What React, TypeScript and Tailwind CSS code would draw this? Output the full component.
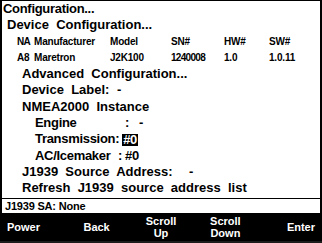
import React from "react";

const rowCls = "h-[16.3px] leading-[16.3px] whitespace-pre";
const big = "text-[13px] tracking-[-0.3px]";

function Line({ indent, children }: { indent: string; children: React.ReactNode }) {
  return <div className={`${rowCls} ${indent} ${big}`}>{children}</div>;
}

export default function App() {
  const buttons = [
    { label: ["Power"], cls: "text-left pl-[7px]" },
    { label: ["Back"], cls: "text-center" },
    { label: ["Scroll", "Up"], cls: "text-center" },
    { label: ["Scroll", "Down"], cls: "text-center" },
    { label: ["Enter"], cls: "text-right pr-[7px]" },
  ];

  return (
    <div
      className="w-[322px] h-[243px] bg-black flex flex-col font-bold text-black"
      style={{ fontFamily: '"Liberation Sans", Arial, sans-serif' }}
    >
      {/* screen area */}
      <div className="mx-[2px] mt-[1px] h-[213px] bg-white flex flex-col">
        <Line indent="pl-[1px]">Configuration...</Line>
        <Line indent="pl-[5px] tracking-[0px]">Device  Configuration...</Line>

        {/* device table */}
        <div className={`${rowCls} text-[10px] tracking-[-0.2px] flex pl-[15px]`}>
          <span className="w-[17px] tracking-[-0.8px]">NA</span>
          <span className="w-[76px]">Manufacturer</span>
          <span className="w-[61px]">Model</span>
          <span className="w-[53px]">SN#</span>
          <span className="w-[45px]">HW#</span>
          <span>SW#</span>
        </div>
        <div className={`${rowCls} text-[10px] tracking-[-0.2px] flex pl-[15px]`}>
          <span className="w-[17px]">A8</span>
          <span className="w-[76px]">Maretron</span>
          <span className="w-[61px]">J2K100</span>
          <span className="w-[53px] tracking-[-0.7px]">1240008</span>
          <span className="w-[45px]">1.0</span>
          <span>1.0.11</span>
        </div>

        <Line indent="pl-[20px] tracking-[0px]">Advanced  Configuration...</Line>
        <div className={`${rowCls} pl-[20px] ${big} tracking-[0px] flex`}>
          <span className="w-[95px]">Device  Label:</span>
          <span>-</span>
        </div>
        <Line indent="pl-[20px] tracking-[0px]">NMEA2000  Instance</Line>
        <div className={`${rowCls} pl-[33px] ${big} flex`}>
          <span className="w-[90px]">Engine</span>
          <span className="w-[14px]">:</span>
          <span>-</span>
        </div>
        <div className={`${rowCls} pl-[33px] ${big} flex items-center`}>
          <span>Transmission:</span>
          <span className="ml-[3px] bg-black text-white leading-[12px] h-[12px] px-[1px] tracking-[-0.5px]">#0</span>
        </div>
        <div className={`${rowCls} pl-[33px] ${big} flex`}>
          <span className="w-[83px]">AC/Icemaker</span>
          <span className="w-[7px]">:</span>
          <span>#0</span>
        </div>
        <div className={`${rowCls} pl-[20px] ${big} tracking-[0px] flex`}>
          <span className="w-[167px]">J1939  Source  Address:</span>
          <span>-</span>
        </div>
        <Line indent="pl-[20px] tracking-[0px]">Refresh  J1939  source  address  list</Line>

        {/* status line */}
        <div className="mt-auto h-[16px] border-y border-black flex items-center pl-[3px] text-[11px] tracking-[-0.2px]">
          J1939 SA: None
        </div>
      </div>

      {/* soft key bar */}
      <div className="flex-1 grid grid-cols-5 items-center text-white text-[11px] leading-[11.5px] border-b-[2px] border-[#1c1c1c]">
        {buttons.map((b, i) => (
          <div key={i} className={b.cls}>
            {b.label.map((l) => (
              <div key={l}>{l}</div>
            ))}
          </div>
        ))}
      </div>
    </div>
  );
}
